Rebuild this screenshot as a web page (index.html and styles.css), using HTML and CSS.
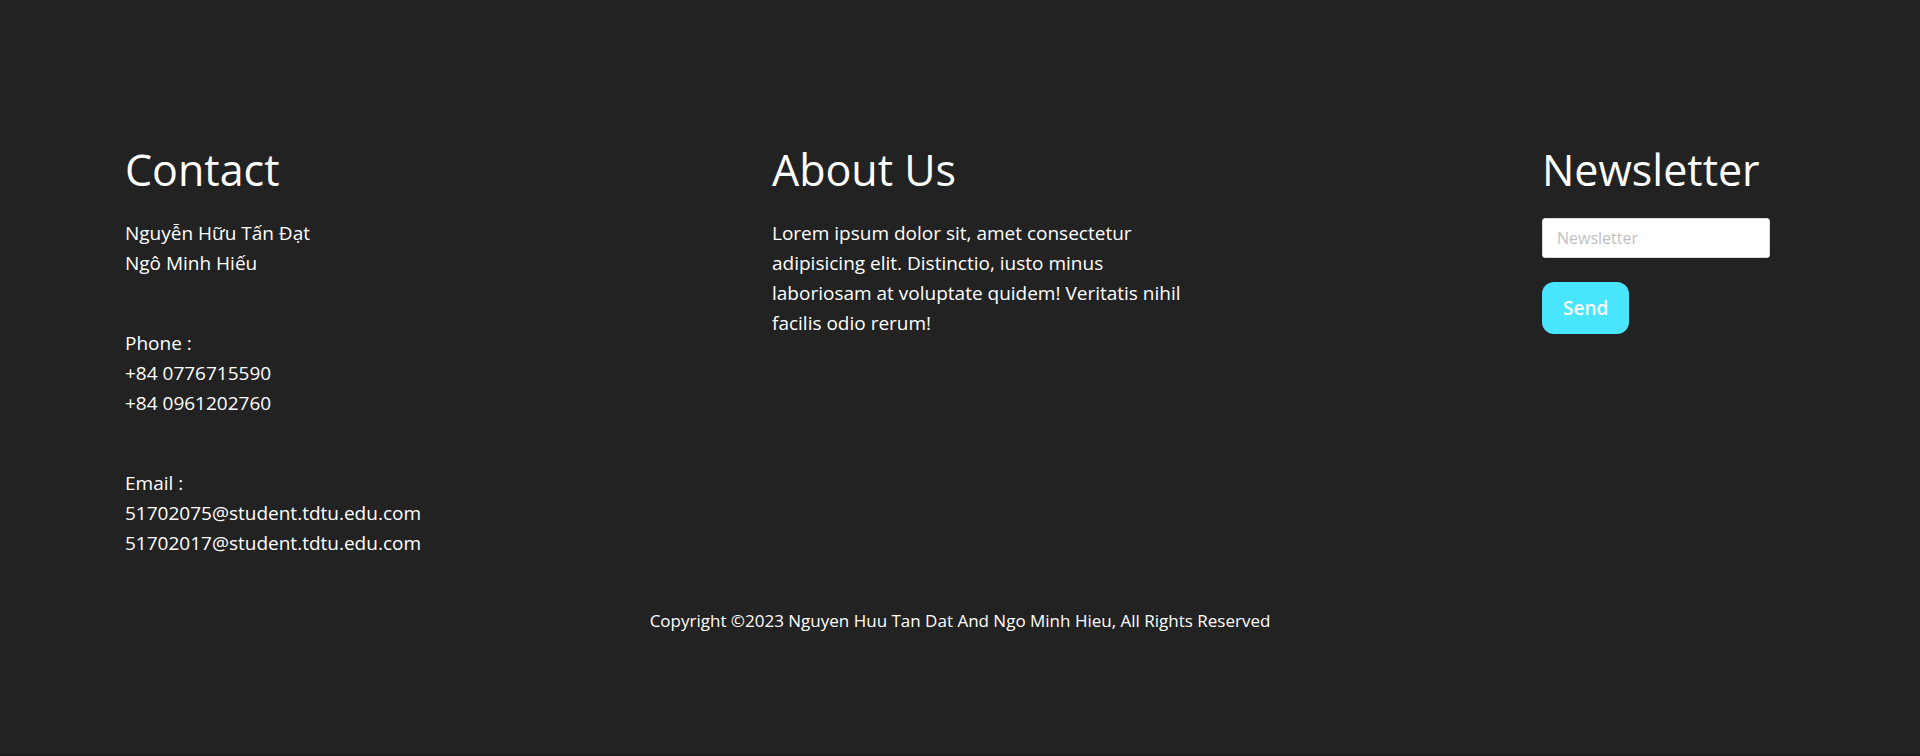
FILE: index.html
```html
<!DOCTYPE html>
<html lang="en">
<head>
<meta charset="utf-8">
<meta name="viewport" content="width=device-width, initial-scale=1">
<title>Contact</title>
<link rel="stylesheet" href="styles.css">
</head>
<body>
<footer class="footer">
  <div class="footer-columns">
    <section class="contact">
      <h2 class="title">Contact</h2>
      <p class="text">Nguyễn Hữu Tấn Đạt<br>Ngô Minh Hiếu</p>
      <p class="text">Phone :<br>+84 0776715590<br>+84 0961202760</p>
      <p class="text">Email :<br>51702075@student.tdtu.edu.com<br>51702017@student.tdtu.edu.com</p>
    </section>
    <section class="about">
      <h2 class="title">About Us</h2>
      <p class="text">Lorem ipsum dolor sit, amet consectetur adipisicing elit. Distinctio, iusto minus laboriosam at voluptate quidem! Veritatis nihil facilis odio rerum!</p>
    </section>
    <form class="newsletter">
      <h2 class="title">Newsletter</h2>
      <input class="field" type="email" placeholder="Newsletter" aria-label="Newsletter">
      <button class="send" type="button">Send</button>
    </form>
  </div>
  <p class="copyright">Copyright ©2023 Nguyen Huu Tan Dat And Ngo Minh Hieu, All Rights Reserved</p>
</footer>
</body>
</html>
```
FILE: styles.css
```css
* {
  box-sizing: border-box;
}

body {
  margin: 0;
  background: #222;
  color: #fff;
  font-family: "Segoe UI", "Open Sans", "Noto Sans", sans-serif;
}

.footer {
  min-height: 100vh;
  padding: 140px 150px 120px 125px;
  border-bottom: 1px solid #1a141c;
}

.footer-columns {
  display: flex;
  justify-content: space-between;
  gap: 40px;
}

.contact {
  flex: 0 0 293px;
}

.about {
  flex: 0 1 419px;
}

.newsletter {
  flex: 0 0 228px;
  display: flex;
  flex-direction: column;
  align-items: flex-start;
}

.title {
  margin: 0 0 18px;
  font-size: 43px;
  font-weight: 400;
  line-height: 60px;
}

.text {
  margin: 0 0 50px;
  font-size: 19px;
  line-height: 30px;
}

.field {
  width: 100%;
  height: 40px;
  padding: 0 14px;
  border: 1px solid #dbdbdb;
  border-radius: 3px;
  background: #fff;
  color: #222;
  font: inherit;
  font-size: 16px;
}

.field::placeholder {
  color: #bfbfbf;
  opacity: 1;
}

.send {
  margin-top: 24px;
  padding: 11px 21px;
  border: 0;
  border-radius: 12px;
  background: #48e5fc;
  color: #fff;
  font: inherit;
  font-size: 19px;
  font-weight: 600;
  line-height: 30px;
}

.copyright {
  margin: 1px -25px 0 0;
  font-size: 17px;
  line-height: 24px;
  text-align: center;
}
```
